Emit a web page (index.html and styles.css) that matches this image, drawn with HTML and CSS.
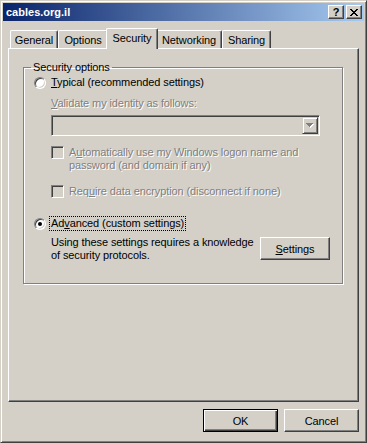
FILE: index.html
```html
<!DOCTYPE html>
<html lang="en">
<head>
    <meta charset="UTF-8">
    <title>cables.org.il</title>
    <link rel="stylesheet" href="styles.css">
</head>
<body>

    <div class="window">
        <div class="titlebar">
            <span class="title">cables.org.il</span>
            <div class="caption-btns">
                <span class="cap-btn help">?</span>
                <span class="cap-btn close">
                    <svg width="8" height="7" viewBox="0 0 8 7">
                        <path d="M0 0h2v1h1v1h2v-1h1v-1h2v1h-1v1h-1v1h-1v1h1v1h1v1h1v1h-2v-1h-1v-1h-2v1h-1v1h-2v-1h1v-1h1v-1h1v-1h-1v-1h-1v-1h-1z"/>
                    </svg>
                </span>
            </div>
        </div>

        <div class="dialog">
            <div class="tabs">
                <div class="tab tab-general">General</div>
                <div class="tab tab-options">Options</div>
                <div class="tab tab-security active">Security</div>
                <div class="tab tab-networking">Networking</div>
                <div class="tab tab-sharing">Sharing</div>
            </div>

            <div class="panel">
                <fieldset class="group">
                    <legend>Security options</legend>

                    <div class="opt">
                        <span class="radio"></span>
                        <span class="opt-label"><u>T</u>ypical (recommended settings)</span>
                    </div>

                    <div class="validate disabled"><u>V</u>alidate my identity as follows:</div>

                    <div class="combo">
                        <span class="combo-btn">
                            <svg width="8" height="5" viewBox="0 0 8 5">
                                <path class="arrow-shadow" d="M1 1h7v1h-1v1h-1v1h-1v1h-1v-1h-1v-1h-1v-1h-1z"/>
                                <path class="arrow" d="M0 0h7v1h-1v1h-1v1h-1v1h-1v-1h-1v-1h-1v-1h-1z"/>
                            </svg>
                        </span>
                    </div>

                    <div class="check check-auto">
                        <span class="checkbox"></span>
                        <span class="disabled">A<u>u</u>tomatically use my Windows logon name and<br>password (and domain if any)</span>
                    </div>

                    <div class="check check-encrypt">
                        <span class="checkbox"></span>
                        <span class="disabled">Req<u>u</u>ire data encryption (disconnect if none)</span>
                    </div>

                    <div class="opt opt-advanced">
                        <span class="radio checked"></span>
                        <span class="opt-label focus">Ad<u>v</u>anced (custom settings)</span>
                    </div>

                    <div class="advanced-body">
                        <p>Using these settings requires a knowledge<br>of security protocols.</p>
                        <button class="btn btn-settings"><u>S</u>ettings</button>
                    </div>
                </fieldset>
            </div>

            <div class="buttons">
                <button class="btn default">OK</button>
                <button class="btn">Cancel</button>
            </div>
        </div>
    </div>

</body>
</html>
```

FILE: styles.css
```css
:root {
    --face: #d4d0c8;
    --light: #ffffff;
    --shadow: #808080;
    --dark: #404040;
}

* {
    box-sizing: border-box;
}

body {
    margin: 0;
    background: var(--face);
    font-family: 'Liberation Sans', Arial, sans-serif;
    font-size: 11px;
    line-height: 13px;
    letter-spacing: -0.1px;
    color: #000;
}

/* Window frame */
.window {
    width: 367px;
    height: 443px;
    padding: 2px;
    background: var(--face);
    border: 1px solid;
    border-color: var(--face) var(--dark) var(--dark) var(--face);
    box-shadow: inset 1px 1px var(--light), inset -1px -1px var(--shadow);
}

.titlebar {
    height: 18px;
    display: flex;
    align-items: center;
    justify-content: space-between;
    padding: 0 2px 0 2px;
    background: linear-gradient(to right, #0a246a, #a6caf0);
}

.title {
    color: #fff;
    font-weight: bold;
    font-size: 11px;
    letter-spacing: 0;
    padding-left: 1px;
}

.caption-btns {
    display: flex;
    gap: 2px;
}

.cap-btn {
    width: 16px;
    height: 14px;
    display: flex;
    align-items: center;
    justify-content: center;
    background: var(--face);
    border: 1px solid;
    border-color: var(--light) var(--dark) var(--dark) var(--light);
    box-shadow: inset -1px -1px var(--shadow);
}

.help {
    font-weight: bold;
    font-size: 11px;
    line-height: 12px;
}

.close svg {
    display: block;
    fill: #000;
}

/* Dialog body */
.dialog {
    padding: 7px 5px 6px 5px;
}

.tabs {
    height: 20px;
    display: flex;
    align-items: flex-end;
    padding-left: 2px;
}

.tab {
    height: 18px;
    padding-top: 3px;
    text-align: center;
    background: var(--face);
    border-top: 1px solid var(--light);
    border-left: 1px solid var(--light);
    border-right: 1px solid var(--dark);
    border-radius: 2px 2px 0 0;
    box-shadow: inset -1px 0 var(--shadow);
}

.tab-general { width: 48px; }
.tab-options { width: 50px; }
.tab-security { width: 48px; }
.tab-networking { width: 66px; }
.tab-sharing { width: 49px; }

.tab.active {
    width: 52px;
    height: 21px;
    margin: 0 -2px -1px -2px;
    position: relative;
    z-index: 1;
}

.panel {
    height: 354px;
    background: var(--face);
    border: 1px solid;
    border-color: var(--light) var(--dark) var(--dark) var(--light);
    box-shadow: inset -1px -1px var(--shadow);
}

/* Group box */
.group {
    width: 320px;
    min-width: 0;
    margin: 12px 0 0 14px;
    padding: 2px 10px 21px 10px;
    border: 1px solid var(--shadow);
    box-shadow: inset 1px 1px var(--light), 1px 1px var(--light);
}

.group legend {
    padding: 0 2px;
    margin-left: -3px;
    line-height: 13px;
}

.opt {
    display: flex;
    align-items: center;
    height: 13px;
    gap: 5px;
}

.opt-advanced {
    margin-top: 19px;
}

.radio {
    width: 12px;
    height: 12px;
    border-radius: 50%;
    background: #fff;
    border: 1px solid;
    border-color: var(--shadow) var(--light) var(--light) var(--shadow);
    box-shadow: inset 1px 1px var(--dark), inset -1px -1px var(--face);
    display: flex;
    align-items: center;
    justify-content: center;
}

.radio.checked::after {
    content: "";
    width: 4px;
    height: 4px;
    border-radius: 50%;
    background: #000;
}

.focus {
    margin-left: -1px;
    padding: 0 1px;
    outline: 1px dotted #000;
}

.disabled {
    color: var(--shadow);
    text-shadow: 1px 1px var(--light);
}

.validate {
    margin: 8px 0 0 17px;
}

.combo {
    width: 269px;
    height: 21px;
    margin: 5px 0 0 17px;
    padding: 1px;
    display: flex;
    justify-content: flex-end;
    background: var(--face);
    border: 1px solid;
    border-color: var(--shadow) var(--light) var(--light) var(--shadow);
    box-shadow: inset 1px 1px var(--dark), inset -1px -1px var(--face);
}

.combo-btn {
    width: 16px;
    height: 17px;
    display: flex;
    align-items: center;
    justify-content: center;
    border: 1px solid;
    border-color: var(--face) var(--dark) var(--dark) var(--face);
    box-shadow: inset 1px 1px var(--light), inset -1px -1px var(--shadow);
}

.combo-btn svg {
    display: block;
}

.arrow { fill: var(--shadow); }
.arrow-shadow { fill: var(--light); }

.check {
    display: flex;
    align-items: flex-start;
    gap: 5px;
    margin-left: 17px;
}

.check-auto { margin-top: 10px; }
.check-encrypt { margin-top: 13px; }

.checkbox {
    flex: none;
    width: 13px;
    height: 13px;
    background: var(--face);
    border: 1px solid;
    border-color: var(--shadow) var(--light) var(--light) var(--shadow);
    box-shadow: inset 1px 1px var(--dark), inset -1px -1px var(--face);
}

.advanced-body {
    display: flex;
    justify-content: space-between;
    align-items: flex-start;
    margin-top: 6px;
    padding-left: 17px;
}

.advanced-body p {
    margin: 0;
}

/* Push buttons */
.btn {
    width: 75px;
    height: 23px;
    padding: 0;
    font-family: 'Liberation Sans', Arial, sans-serif;
    font-size: 11px;
    letter-spacing: -0.1px;
    color: #000;
    background: var(--face);
    border: 1px solid;
    border-color: var(--light) var(--dark) var(--dark) var(--light);
    border-radius: 0;
    box-shadow: inset -1px -1px var(--shadow);
}

.btn.default {
    border-color: #000;
    box-shadow: inset 1px 1px var(--light), inset -1px -1px var(--dark), inset -2px -2px var(--shadow);
}

.btn-settings {
    width: 70px;
    margin: 1px 2px 0 0;
}

.buttons {
    display: flex;
    justify-content: flex-end;
    gap: 6px;
    margin-top: 7px;
}
```
